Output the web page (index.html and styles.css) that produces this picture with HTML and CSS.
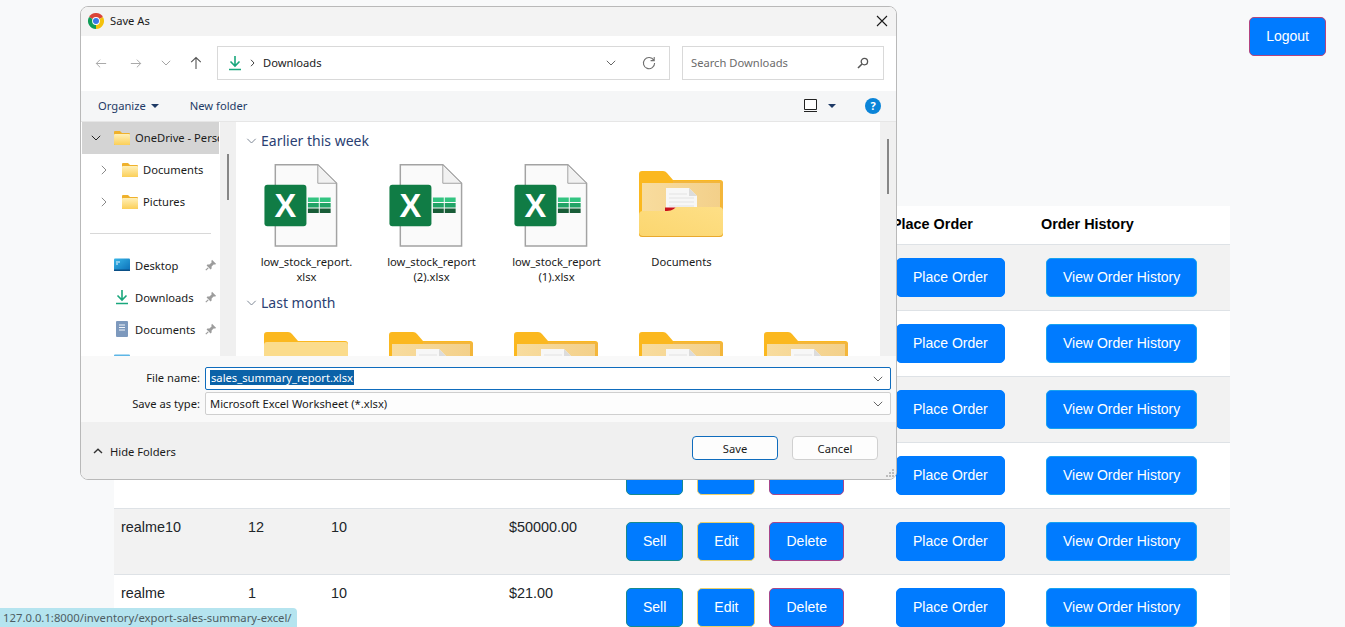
FILE: index.html
```html
<!DOCTYPE html>
<html lang="en">
<head>
<meta charset="UTF-8">
<meta name="viewport" content="width=device-width, initial-scale=1.0">
<title>Inventory</title>
<link rel="stylesheet" href="styles.css">
</head>
<body>

<svg class="sprite" xmlns="http://www.w3.org/2000/svg">
  <defs>
    <linearGradient id="pocket" x1="0" y1="1" x2="1" y2="0">
      <stop offset="0" stop-color="#fbd66f"/>
      <stop offset="1" stop-color="#fedf86"/>
    </linearGradient>
    <linearGradient id="panel" x1="0" y1="0" x2="1" y2="0">
      <stop offset="0" stop-color="#f8dc9e"/>
      <stop offset="1" stop-color="#f3d08a"/>
    </linearGradient>
    <linearGradient id="smallFolder" x1="0" y1="0" x2="0" y2="1">
      <stop offset="0" stop-color="#fff0b8"/>
      <stop offset="1" stop-color="#fbcf58"/>
    </linearGradient>
    <linearGradient id="screen" x1="0" y1="0" x2="1" y2="1">
      <stop offset="0" stop-color="#38b6e8"/>
      <stop offset="1" stop-color="#0b6fb8"/>
    </linearGradient>
  </defs>
  <symbol id="excel" viewBox="0 0 74 84">
    <path d="M11 .8H54L73 19.5V83H11Z" fill="#fafafa" stroke="#a3a3a3" stroke-width="1.5"/>
    <path d="M54 .8V19.5H73Z" fill="#f1f1f1" stroke="#a3a3a3" stroke-width="1"/>
    <rect y="21" width="42.5" height="42" rx="3" fill="#107c45"/>
    <text x="21.2" y="54" class="excel-x">X</text>
    <path d="M44 34h11v4.5H44zM56 34h11v4.5H56z" fill="#33c481"/>
    <path d="M44 39.5h11V44H44zM56 39.5h11V44H56z" fill="#21a366"/>
    <path d="M44 45h11v4.5H44zM56 45h11v4.5H56z" fill="#185c37"/>
  </symbol>
  <symbol id="folderOpen" viewBox="0 0 84 66">
    <path d="M0 3a3 3 0 0 1 3-3H24a5 5 0 0 1 4 2L34 9H81a3 3 0 0 1 3 3V63a3 3 0 0 1-3 3H3a3 3 0 0 1-3-3Z" fill="#fbb81f"/>
    <path d="M3 12H81V44H3Z" fill="url(#panel)"/>
    <path d="M82 10H34l0 2h47l1 50h2V12a3 3 0 0 0-2-2Z" fill="#f3b63c"/>
    <path d="M27 17H50L58 25V40H27Z" fill="#f7f7f7"/>
    <path d="M50 17V25H58Z" fill="#dcdcdc"/>
    <path d="M30 23h18M30 27h25M30 31h25M30 35h25" stroke="#e3e3e3"/>
    <path d="M26 36.500h11L32 41H26Z" fill="#c9111b"/>
    <path d="M0 44a4 4 0 0 1 4-4H28Q32 40 35 38L37 36H80a4 4 0 0 1 4 4V62a4 4 0 0 1-4 4H4a4 4 0 0 1-4-4Z" fill="url(#pocket)"/>
    <path d="M0 63v-1a4 4 0 0 0 4 3H80a4 4 0 0 0 4-3v1a4 4 0 0 1-4 3H4a4 4 0 0 1-4-3Z" fill="#e9a92d"/>
  </symbol>
  <symbol id="folderPlain" viewBox="0 0 84 66">
    <path d="M0 3a3 3 0 0 1 3-3H24a5 5 0 0 1 4 2L34 9H81a3 3 0 0 1 3 3V63a3 3 0 0 1-3 3H3a3 3 0 0 1-3-3Z" fill="#fbb81f"/>
    <path d="M0 13a3 3 0 0 1 3-3H81a3 3 0 0 1 3 3V62a4 4 0 0 1-4 4H4a4 4 0 0 1-4-4Z" fill="#fbdc8c"/>
  </symbol>
  <symbol id="treeFolder" viewBox="0 0 16 14">
    <path d="M0 1a1 1 0 0 1 1-1H6L8 2H15a1 1 0 0 1 1 1V13a1 1 0 0 1-1 1H1a1 1 0 0 1-1-1Z" fill="#efb12c"/>
    <path d="M0 4a1 1 0 0 1 1-1H15a1 1 0 0 1 1 1V13a1 1 0 0 1-1 1H1a1 1 0 0 1-1-1Z" fill="url(#smallFolder)"/>
  </symbol>
  <symbol id="download" viewBox="0 0 14 16">
    <path d="M7 1V11M2.500 6.500 7 11l4.500-4.500" fill="none" stroke="#19a77c" stroke-width="1.600"/>
    <path d="M1 14.500H13" stroke="#19a77c" stroke-width="1.500"/>
  </symbol>
  <symbol id="pin" viewBox="0 0 12 12">
    <path d="M7 .8 11.200 5 10 5.600 8.600 5.400 6.600 7.600 6.600 9.600 5.600 10.400 1.600 6.400 2.400 5.400 4.400 5.400 6.600 3.400 6.400 2Z" fill="#9c9c9c"/>
    <path d="M3.200 8.800.8 11.200" stroke="#9c9c9c" stroke-width="1.200"/>
  </symbol>
  <symbol id="chevron" viewBox="0 0 10 6">
    <path d="M.8.8 5 5 9.200.8" fill="none" stroke="currentColor" stroke-width="1"/>
  </symbol>
</svg>

<header class="topbar">
  <button class="btn btn-logout">Logout</button>
</header>

<table class="stock-table">
  <colgroup>
    <col class="col-name"><col class="col-qty"><col class="col-level"><col class="col-price">
    <col class="col-actions"><col class="col-place"><col class="col-history">
  </colgroup>
  <thead>
    <tr><th></th><th></th><th></th><th></th><th></th><th class="head-place">Place Order</th><th>Order History</th></tr>
  </thead>
  <tbody>
    <tr>
      <td></td><td></td><td></td><td></td>
      <td><div class="actions"><button class="btn btn-sell">Sell</button><button class="btn btn-edit">Edit</button><button class="btn btn-delete">Delete</button></div></td>
      <td class="cell-place"><button class="btn btn-place">Place Order</button></td>
      <td class="cell-history"><button class="btn btn-history">View Order History</button></td>
    </tr>
    <tr>
      <td></td><td></td><td></td><td></td>
      <td><div class="actions"><button class="btn btn-sell">Sell</button><button class="btn btn-edit">Edit</button><button class="btn btn-delete">Delete</button></div></td>
      <td class="cell-place"><button class="btn btn-place">Place Order</button></td>
      <td class="cell-history"><button class="btn btn-history">View Order History</button></td>
    </tr>
    <tr>
      <td></td><td></td><td></td><td></td>
      <td><div class="actions"><button class="btn btn-sell">Sell</button><button class="btn btn-edit">Edit</button><button class="btn btn-delete">Delete</button></div></td>
      <td class="cell-place"><button class="btn btn-place">Place Order</button></td>
      <td class="cell-history"><button class="btn btn-history">View Order History</button></td>
    </tr>
    <tr>
      <td></td><td></td><td></td><td></td>
      <td><div class="actions"><button class="btn btn-sell">Sell</button><button class="btn btn-edit">Edit</button><button class="btn btn-delete">Delete</button></div></td>
      <td class="cell-place"><button class="btn btn-place">Place Order</button></td>
      <td class="cell-history"><button class="btn btn-history">View Order History</button></td>
    </tr>
    <tr>
      <td>realme10</td><td>12</td><td>10</td><td>$50000.00</td>
      <td><div class="actions"><button class="btn btn-sell">Sell</button><button class="btn btn-edit">Edit</button><button class="btn btn-delete">Delete</button></div></td>
      <td class="cell-place"><button class="btn btn-place">Place Order</button></td>
      <td class="cell-history"><button class="btn btn-history">View Order History</button></td>
    </tr>
    <tr>
      <td>realme</td><td>1</td><td>10</td><td>$21.00</td>
      <td><div class="actions"><button class="btn btn-sell">Sell</button><button class="btn btn-edit">Edit</button><button class="btn btn-delete">Delete</button></div></td>
      <td class="cell-place"><button class="btn btn-place">Place Order</button></td>
      <td class="cell-history"><button class="btn btn-history">View Order History</button></td>
    </tr>
  </tbody>
</table>

<div class="status-bubble">127.0.0.1:8000/inventory/export-sales-summary-excel/</div>

<!-- native save dialog sits over the page -->
<div class="dialog">
  <div class="dialog-title">
    <svg class="chrome-logo" viewBox="0 0 16 16">
      <path d="M8 8 1.070 4A8 8 0 0 1 14.930 4Z" fill="#db4437"/>
      <path d="M8 8 14.930 4A8 8 0 0 1 8 16Z" fill="#f4c20d"/>
      <path d="M8 8V16A8 8 0 0 1 1.070 4Z" fill="#0f9d58"/>
      <circle cx="8" cy="8" r="3.900" fill="#fff"/>
      <circle cx="8" cy="8" r="3" fill="#3b78e7"/>
    </svg>
    <span class="dialog-name">Save As</span>
    <svg class="close-icon" viewBox="0 0 12 12"><path d="M1 1 11 11M11 1 1 11" stroke="#1a1a1a" stroke-width="1.100"/></svg>
  </div>

  <div class="dialog-nav">
    <svg class="nav-arrow" viewBox="0 0 14 12"><path d="M13 6H1.500M6 1.500 1.500 6 6 10.500" fill="none" stroke="#a5a5a5" stroke-width="1.100"/></svg>
    <svg class="nav-arrow nav-forward" viewBox="0 0 14 12"><path d="M1 6H12.500M8 1.500 12.500 6 8 10.500" fill="none" stroke="#a5a5a5" stroke-width="1.100"/></svg>
    <svg class="nav-recent"><use href="#chevron"/></svg>
    <svg class="nav-up" viewBox="0 0 12 14"><path d="M6 13V1.500M1.200 6.200 6 1.500l4.800 4.700" fill="none" stroke="#555" stroke-width="1.100"/></svg>
    <div class="address">
      <svg class="address-icon"><use href="#download"/></svg>
      <svg class="address-sep" viewBox="0 0 5 8"><path d="M1 .8 4 4 1 7.200" fill="none" stroke="#444" stroke-width="1"/></svg>
      <span class="address-text">Downloads</span>
      <svg class="address-drop"><use href="#chevron"/></svg>
      <svg class="address-refresh" viewBox="0 0 14 14"><path d="M11.800 4.200A5.600 5.600 0 1 0 12.600 7M12.200 1V4.600H8.600" fill="none" stroke="#6f6f6f" stroke-width="1.100"/></svg>
    </div>
    <div class="search">
      <span class="search-text">Search Downloads</span>
      <svg class="search-icon" viewBox="0 0 12 12"><circle cx="7.400" cy="4.600" r="3.200" fill="none" stroke="#555" stroke-width="1.300"/><path d="M5 7 1 11" stroke="#555" stroke-width="1.600"/></svg>
    </div>
  </div>

  <div class="dialog-commands">
    <span class="command">Organize</span>
    <span class="caret"></span>
    <span class="command command-new">New folder</span>
    <svg class="view-icon" viewBox="0 0 13 13"><path d="M.5.5H12.500V10.500H.5Z" fill="#fff" stroke="#222"/><path d="M0 12.500H13" stroke="#222"/></svg>
    <span class="caret caret-view"></span>
    <span class="help-icon">?</span>
  </div>

  <div class="dialog-body">
    <nav class="tree">
      <div class="tree-list">
        <div class="tree-row tree-selected">
          <svg class="tree-toggle tree-toggle-open"><use href="#chevron"/></svg>
          <svg class="tree-folder"><use href="#treeFolder"/></svg>
          <span class="tree-label">OneDrive - Personal</span>
        </div>
        <div class="tree-row tree-child">
          <svg class="tree-toggle" viewBox="0 0 6 10"><path d="M.8.8 5 5 .8 9.200" fill="none" stroke="#8a8a8a"/></svg>
          <svg class="tree-folder"><use href="#treeFolder"/></svg>
          <span class="tree-label">Documents</span>
        </div>
        <div class="tree-row tree-child">
          <svg class="tree-toggle" viewBox="0 0 6 10"><path d="M.8.8 5 5 .8 9.200" fill="none" stroke="#8a8a8a"/></svg>
          <svg class="tree-folder"><use href="#treeFolder"/></svg>
          <span class="tree-label">Pictures</span>
        </div>
        <div class="tree-divider"></div>
        <div class="tree-row tree-quick">
          <svg class="tree-folder" viewBox="0 0 16 13"><rect width="16" height="12" rx="1" fill="url(#screen)"/><path d="M2 3h4v1H2zM2 5h2v1H2z" fill="#e8f6fd"/><path d="M0 11h16v1.500H0z" fill="#0a4f86"/></svg>
          <span class="tree-label">Desktop</span>
          <svg class="pin"><use href="#pin"/></svg>
        </div>
        <div class="tree-row tree-quick">
          <svg class="tree-folder tree-download"><use href="#download"/></svg>
          <span class="tree-label">Downloads</span>
          <svg class="pin"><use href="#pin"/></svg>
        </div>
        <div class="tree-row tree-quick">
          <svg class="tree-folder tree-doc" viewBox="0 0 12 16"><rect width="12" height="16" rx="1" fill="#7d99bd"/><path d="M3 3.500h6v1H3zM3 6h6v1H3zM3 8.500h6v1H3z" fill="#f1f5fa"/></svg>
          <span class="tree-label">Documents</span>
          <svg class="pin"><use href="#pin"/></svg>
        </div>
        <div class="tree-row tree-quick">
          <svg class="tree-folder" viewBox="0 0 16 13"><rect width="16" height="13" rx="1" fill="#5db6e6"/></svg>
        </div>
      </div>
      <div class="scroll-track tree-scroll"><div class="scroll-thumb"></div></div>
    </nav>

    <div class="files">
      <section class="group">
        <h3 class="group-head"><svg class="group-chevron"><use href="#chevron"/></svg>Earlier this week</h3>
        <div class="tiles">
          <div class="tile"><svg class="tile-excel"><use href="#excel"/></svg><span>low_stock_report.<br>xlsx</span></div>
          <div class="tile"><svg class="tile-excel"><use href="#excel"/></svg><span>low_stock_report<br>(2).xlsx</span></div>
          <div class="tile"><svg class="tile-excel"><use href="#excel"/></svg><span>low_stock_report<br>(1).xlsx</span></div>
          <div class="tile"><svg class="tile-folder"><use href="#folderOpen"/></svg><span>Documents</span></div>
        </div>
      </section>
      <section class="group">
        <h3 class="group-head"><svg class="group-chevron"><use href="#chevron"/></svg>Last month</h3>
        <div class="tiles">
          <div class="tile"><svg class="tile-folder"><use href="#folderPlain"/></svg></div>
          <div class="tile"><svg class="tile-folder"><use href="#folderOpen"/></svg></div>
          <div class="tile"><svg class="tile-folder"><use href="#folderOpen"/></svg></div>
          <div class="tile"><svg class="tile-folder"><use href="#folderOpen"/></svg></div>
          <div class="tile"><svg class="tile-folder"><use href="#folderOpen"/></svg></div>
        </div>
      </section>
    </div>
    <div class="scroll-track files-scroll"><div class="scroll-thumb"></div></div>
  </div>

  <div class="dialog-fields">
    <div class="field field-name">
      <label class="field-label">File name:</label>
      <div class="field-box field-active"><span class="field-selected">sales_summary_report.xlsx</span><svg class="field-drop"><use href="#chevron"/></svg></div>
    </div>
    <div class="field">
      <label class="field-label">Save as type:</label>
      <div class="field-box"><span class="field-value">Microsoft Excel Worksheet (*.xlsx)</span><svg class="field-drop"><use href="#chevron"/></svg></div>
    </div>
  </div>

  <div class="dialog-footer">
    <svg class="hide-chevron" viewBox="0 0 10 6"><path d="M1 5 5 1.200 9 5" fill="none" stroke="#333" stroke-width="1.400"/></svg>
    <span class="hide-label">Hide Folders</span>
    <button class="win-btn win-primary">Save</button>
    <button class="win-btn">Cancel</button>
    <svg class="grip" viewBox="0 0 9 9"><path d="M7 0h2v2H7zM4 3h2v2H4zM7 3h2v2H7zM1 6h2v2H1zM4 6h2v2H4zM7 6h2v2H7z" fill="#bdbdbd"/></svg>
  </div>
</div>

</body>
</html>
```

FILE: styles.css
```css
html, body {
  overflow: hidden;
}
body {
  margin: 0;
  height: 627px;
  background-color: #f8f9fa;
  font-family: "Liberation Sans", Arial, sans-serif;
  font-size: 14.4px;
  color: #212529;
}
.sprite {
  display: block;
  width: 0;
  height: 0;
}
.excel-x {
  font-family: "Liberation Sans", Arial, sans-serif;
  font-size: 33px;
  font-weight: bold;
  fill: #fff;
  text-anchor: middle;
}

/* page behind the dialog */
.topbar {
  display: flex;
  justify-content: flex-end;
  align-items: flex-start;
  height: 189px;
  padding: 17px 19px 0 0;
}
.btn {
  height: 39px;
  padding: 0 16px 2px;
  border: 1px solid #007bff;
  border-radius: 5px;
  background-color: #007bff;
  color: #fff;
  font-family: inherit;
  font-size: 14px;
  cursor: pointer;
}
.btn-logout {
  border-color: #b3447f;
}
.btn-delete {
  border-color: #a8468a;
}
.btn-sell {
  border-color: #168a8f;
}
.btn-edit {
  border-color: #e8cf6a;
}
.btn-history {
  border-color: #17a2f0;
}
.stock-table {
  width: 1116px;
  margin-left: 114px;
  border-collapse: collapse;
  table-layout: fixed;
  background-color: #fff;
}
.col-name { width: 127px; }
.col-qty { width: 83px; }
.col-level { width: 178px; }
.col-price { width: 117px; }
.col-actions { width: 267px; }
.col-place { width: 148px; }
.col-history { width: 196px; }
.stock-table th {
  height: 36px;
  padding: 0 7px 2px;
  border-bottom: 1px solid #dee2e6;
  color: #000;
  font-weight: bold;
  text-align: left;
}
.stock-table th.head-place {
  padding-left: 6px;
}
.stock-table td {
  height: 66px;
  padding: 9px 7px 0;
  border-bottom: 1px solid #dee2e6;
  line-height: 18px;
  vertical-align: top;
  box-sizing: border-box;
}
.stock-table tbody tr:nth-child(odd) {
  background-color: #f2f2f2;
}
.stock-table td:nth-child(n+5) {
  padding-top: 13px;
}
.stock-table td.cell-place {
  padding-left: 10px;
}
.stock-table td.cell-history {
  padding-left: 12px;
}
.actions {
  display: flex;
  gap: 14px;
}
.status-bubble {
  position: absolute;
  left: 0;
  bottom: 0;
  height: 19px;
  padding: 0 5px 0 3px;
  border-top-right-radius: 4px;
  background-color: #b5e4ef;
  color: #4d5d63;
  font-family: "Noto Sans", sans-serif;
  font-size: 11.3px;
  line-height: 19px;
}

/* save as dialog */
.dialog {
  position: absolute;
  left: 80px;
  top: 6px;
  width: 817px;
  height: 474px;
  box-sizing: border-box;
  display: flex;
  flex-direction: column;
  overflow: hidden;
  border: 1px solid #b9b9b9;
  border-radius: 8px;
  background-color: #fff;
  color: #1a1a1a;
  font-family: "Noto Sans", sans-serif;
  font-size: 11.2px;
}
.dialog-title {
  display: flex;
  align-items: center;
  height: 27px;
  padding: 0 8px 2px 7px;
  flex: none;
  background-color: #f3f3f3;
}
.chrome-logo {
  width: 16px;
  height: 16px;
}
.dialog-name {
  margin-left: 6px;
}
.close-icon {
  width: 12px;
  height: 12px;
  margin-left: auto;
}
.dialog-nav {
  display: flex;
  align-items: center;
  height: 54px;
  flex: none;
  padding: 0 0 1px 14px;
}
.nav-arrow {
  width: 12px;
  height: 11px;
}
.nav-forward {
  margin-left: 23px;
}
.nav-recent {
  width: 10px;
  height: 6px;
  margin-left: 19px;
  color: #a5a5a5;
}
.nav-up {
  width: 12px;
  height: 14px;
  margin-left: 19px;
}
.address {
  display: flex;
  align-items: center;
  width: 453px;
  height: 34px;
  margin-left: 15px;
  box-sizing: border-box;
  border: 1px solid #d9d9d9;
  padding-left: 10px;
}
.address-icon {
  width: 14px;
  height: 16px;
}
.address-sep {
  width: 5px;
  height: 8px;
  margin-left: 8px;
}
.address-text {
  margin: 0 0 2px 8px;
}
.address-drop {
  width: 10px;
  height: 6px;
  margin-left: auto;
  color: #666;
}
.address-refresh {
  width: 14px;
  height: 14px;
  margin: 0 13px 0 26px;
}
.search {
  display: flex;
  align-items: center;
  justify-content: space-between;
  width: 202px;
  height: 34px;
  margin-left: 12px;
  box-sizing: border-box;
  border: 1px solid #d9d9d9;
  padding: 0 14px 0 8px;
  color: #6b6b6b;
}
.search-text {
  margin-bottom: 2px;
}
.search-icon {
  width: 12px;
  height: 12px;
}
.dialog-commands {
  display: flex;
  align-items: center;
  height: 29px;
  flex: none;
  padding: 0 0 1px 17px;
  background-color: #f5f6f7;
  border-bottom: 1px solid #e6e6e6;
  color: #1e3a66;
}
.command-new {
  margin-left: 31px;
}
.caret {
  width: 0;
  height: 0;
  margin-left: 5px;
  border-left: 4px solid transparent;
  border-right: 4px solid transparent;
  border-top: 4px solid #1e3a66;
}
.view-icon {
  width: 13px;
  height: 13px;
  margin-left: auto;
}
.caret-view {
  margin-left: 11px;
}
.help-icon {
  width: 16px;
  height: 16px;
  margin: 0 15px 0 29px;
  border-radius: 50%;
  background-color: #0a84d8;
  color: #fff;
  font-size: 11px;
  font-weight: bold;
  line-height: 16px;
  text-align: center;
}
.dialog-body {
  display: flex;
  flex: 1;
  min-height: 0;
  overflow: hidden;
}
.tree {
  display: flex;
  width: 155px;
  flex: none;
}
.tree-list {
  width: 138px;
  flex: none;
  overflow: hidden;
}
.tree-row {
  display: flex;
  align-items: center;
  height: 32px;
  white-space: nowrap;
  overflow: hidden;
}
.tree-selected {
  margin-left: 1px;
  background-color: #d4d4d4;
}
.tree-toggle {
  width: 10px;
  height: 6px;
  flex: none;
  margin-left: 9px;
  color: #222;
}
.tree-toggle-open {
  margin-right: 13px;
}
.tree-child .tree-toggle {
  width: 6px;
  height: 10px;
  margin-left: 20px;
  margin-right: 15px;
}
.tree-folder {
  width: 16px;
  height: 14px;
  flex: none;
}
.tree-label {
  margin-left: 5px;
}
.tree-selected .tree-label, .tree-child .tree-label {
  margin-bottom: 2px;
}
.tree-divider {
  height: 1px;
  margin: 15px 8px 15px 9px;
  background-color: #d8d8d8;
}
.tree-quick {
  padding-left: 33px;
}
.tree-download {
  height: 16px;
}
.tree-doc {
  height: 16px;
}
.pin {
  width: 12px;
  height: 12px;
  margin-left: auto;
  margin-right: 2px;
}
.scroll-track {
  flex: none;
  background-color: #f0f0f0;
}
.tree-scroll {
  width: 16px;
  margin-left: 1px;
  padding-top: 32px;
}
.scroll-thumb {
  width: 2px;
  height: 46px;
  margin-left: 7px;
  background-color: #868686;
}
.files {
  flex: 1;
  min-width: 0;
  padding: 7px 0 0 8px;
  overflow: hidden;
}
.files-scroll {
  width: 16px;
  padding-top: 17px;
}
.files-scroll .scroll-thumb {
  height: 55px;
}
.group {
  margin-bottom: 7px;
}
.group-head {
  display: flex;
  align-items: center;
  height: 22px;
  margin: 0 0 13px;
  color: #2b3f73;
  font-size: 14px;
  font-weight: normal;
}
.group + .group .group-head {
  margin-bottom: 12px;
}
.group-chevron {
  width: 11px;
  height: 6px;
  margin: 1px 4px 0 2px;
  color: #7f8896;
}
.tiles {
  display: flex;
}
.tile {
  display: flex;
  flex-direction: column;
  align-items: center;
  flex: none;
  width: 125px;
  height: 120px;
  text-align: center;
  line-height: 15px;
}
.tile-excel {
  width: 74px;
  height: 84px;
  margin-right: 12px;
}
.tile-folder {
  width: 84px;
  height: 66px;
  margin-top: 7px;
  margin-right: 1px;
  margin-bottom: 10px;
}
.tile span {
  margin-top: 7px;
}
.dialog-fields {
  display: flex;
  flex-direction: column;
  gap: 2px;
  flex: none;
  height: 66px;
  box-sizing: border-box;
  padding: 11px 5px 0 0;
  background-color: #f9f9f9;
}
.field {
  display: flex;
  align-items: center;
}
.field-label {
  width: 119px;
  flex: none;
  text-align: right;
}
.field-name .field-label, .field-selected {
  margin-bottom: 2px;
}
.field-box {
  display: flex;
  align-items: center;
  flex: 1;
  height: 23px;
  margin-left: 5px;
  box-sizing: border-box;
  border: 1px solid #cfcfcf;
  border-radius: 2px;
  background-color: #fdfdfd;
  padding: 0 7px 0 4px;
}
.field-active {
  border-color: #0f6cbd;
  background-color: #fff;
}
.field-selected {
  padding: 0 1px;
  background-color: #0b62a8;
  color: #fff;
  line-height: 15px;
}
.field-drop {
  width: 10px;
  height: 6px;
  margin-left: auto;
  color: #666;
}
.dialog-footer {
  display: flex;
  align-items: center;
  flex: none;
  height: 57px;
  padding-left: 12px;
  background-color: #f0f0f0;
}
.hide-chevron {
  width: 10px;
  height: 6px;
  margin-top: 1px;
}
.hide-label {
  margin: 1px auto 0 7px;
}
.win-btn {
  width: 86px;
  height: 24px;
  margin: 0 14px 5px 0;
  padding: 0;
  border: 1px solid #d0d0d0;
  border-radius: 4px;
  background-color: #fdfdfd;
  color: #1a1a1a;
  font-family: inherit;
  font-size: 11.2px;
}
.win-primary {
  border-color: #0f6cbd;
}
.win-btn + .win-btn {
  margin-right: 18px;
}
.grip {
  position: absolute;
  right: 2px;
  bottom: 1px;
  width: 9px;
  height: 9px;
}
```
